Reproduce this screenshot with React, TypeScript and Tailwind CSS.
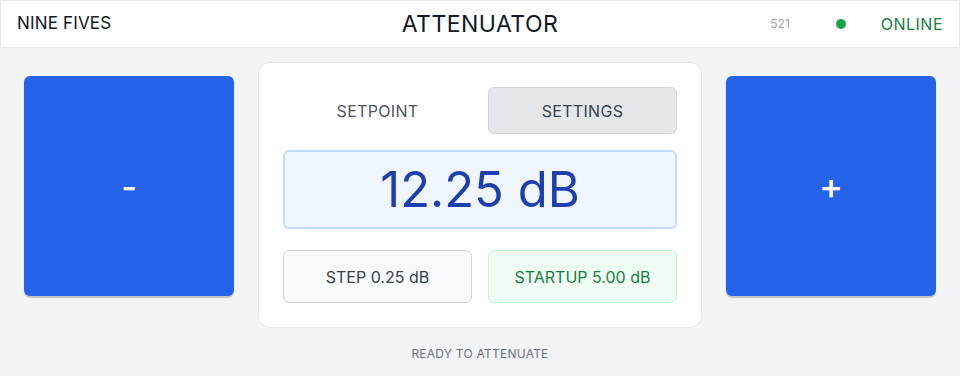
export default function App() {
  return (
    <div className="w-[960px] h-[376px] bg-[#f3f4f6] font-['Inter',sans-serif] overflow-hidden">
      {/* Header */}
      <header className="h-[48px] bg-white border border-[#e5e7eb] flex items-center px-4">
        <div className="flex-1 text-[17px] text-[#111827] tracking-[0.01em]">NINE FIVES</div>
        <div className="text-[23px] text-[#111827] tracking-[0.02em]">ATTENUATOR</div>
        <div className="flex-1 flex items-center justify-end">
          <span className="text-[12px] text-[#9ca3af] mr-[46px]">521</span>
          <span className="w-[10px] h-[10px] rounded-full bg-[#16a34a] mr-[35px]" />
          <span className="text-[16px] text-[#15803d] tracking-[0.03em]">ONLINE</span>
        </div>
      </header>

      {/* Main */}
      <main className="flex gap-6 px-6 pt-[14px]">
        <button className="mt-[14px] w-[210px] h-[220px] rounded-md bg-[#2563eb] text-white text-[34px] font-medium shadow-[0_2px_1px_rgba(0,0,0,0.2)]">
          -
        </button>

        <div className="flex flex-col items-center">
          <div className="w-[444px] bg-white border border-[#e5e7eb] rounded-xl p-6 flex flex-col">
            <div className="grid grid-cols-2 gap-4">
              <button className="h-[47px] rounded-md text-[16px] text-[#4b5563] tracking-[0.02em]">SETPOINT</button>
              <button className="h-[47px] rounded-md bg-[#e5e7eb] border border-[#d1d5db] text-[16px] text-[#374151] tracking-[0.02em]">
                SETTINGS
              </button>
            </div>
            <div className="mt-4 h-[79px] rounded-md bg-[#eff6ff] border-2 border-[#bfdbfe] flex items-center justify-center text-[49px] text-[#1e40af]">
              12.25 dB
            </div>
            <div className="mt-[21px] grid grid-cols-2 gap-4">
              <button className="h-[53px] rounded-md bg-[#f9fafb] border border-[#d1d5db] text-[16px] text-[#374151]">
                STEP 0.25 dB
              </button>
              <button className="h-[53px] rounded-md bg-[#f0fdf4] border border-[#bbf7d0] text-[16px] text-[#15803d]">
                STARTUP 5.00 dB
              </button>
            </div>
          </div>
          <div className="mt-[17px] text-[12px] text-[#6b7280] tracking-[0.02em]">READY TO ATTENUATE</div>
        </div>

        <button className="mt-[14px] w-[210px] h-[220px] rounded-md bg-[#2563eb] text-white text-[36px] font-medium shadow-[0_2px_1px_rgba(0,0,0,0.2)]">
          +
        </button>
      </main>
    </div>
  );
}
